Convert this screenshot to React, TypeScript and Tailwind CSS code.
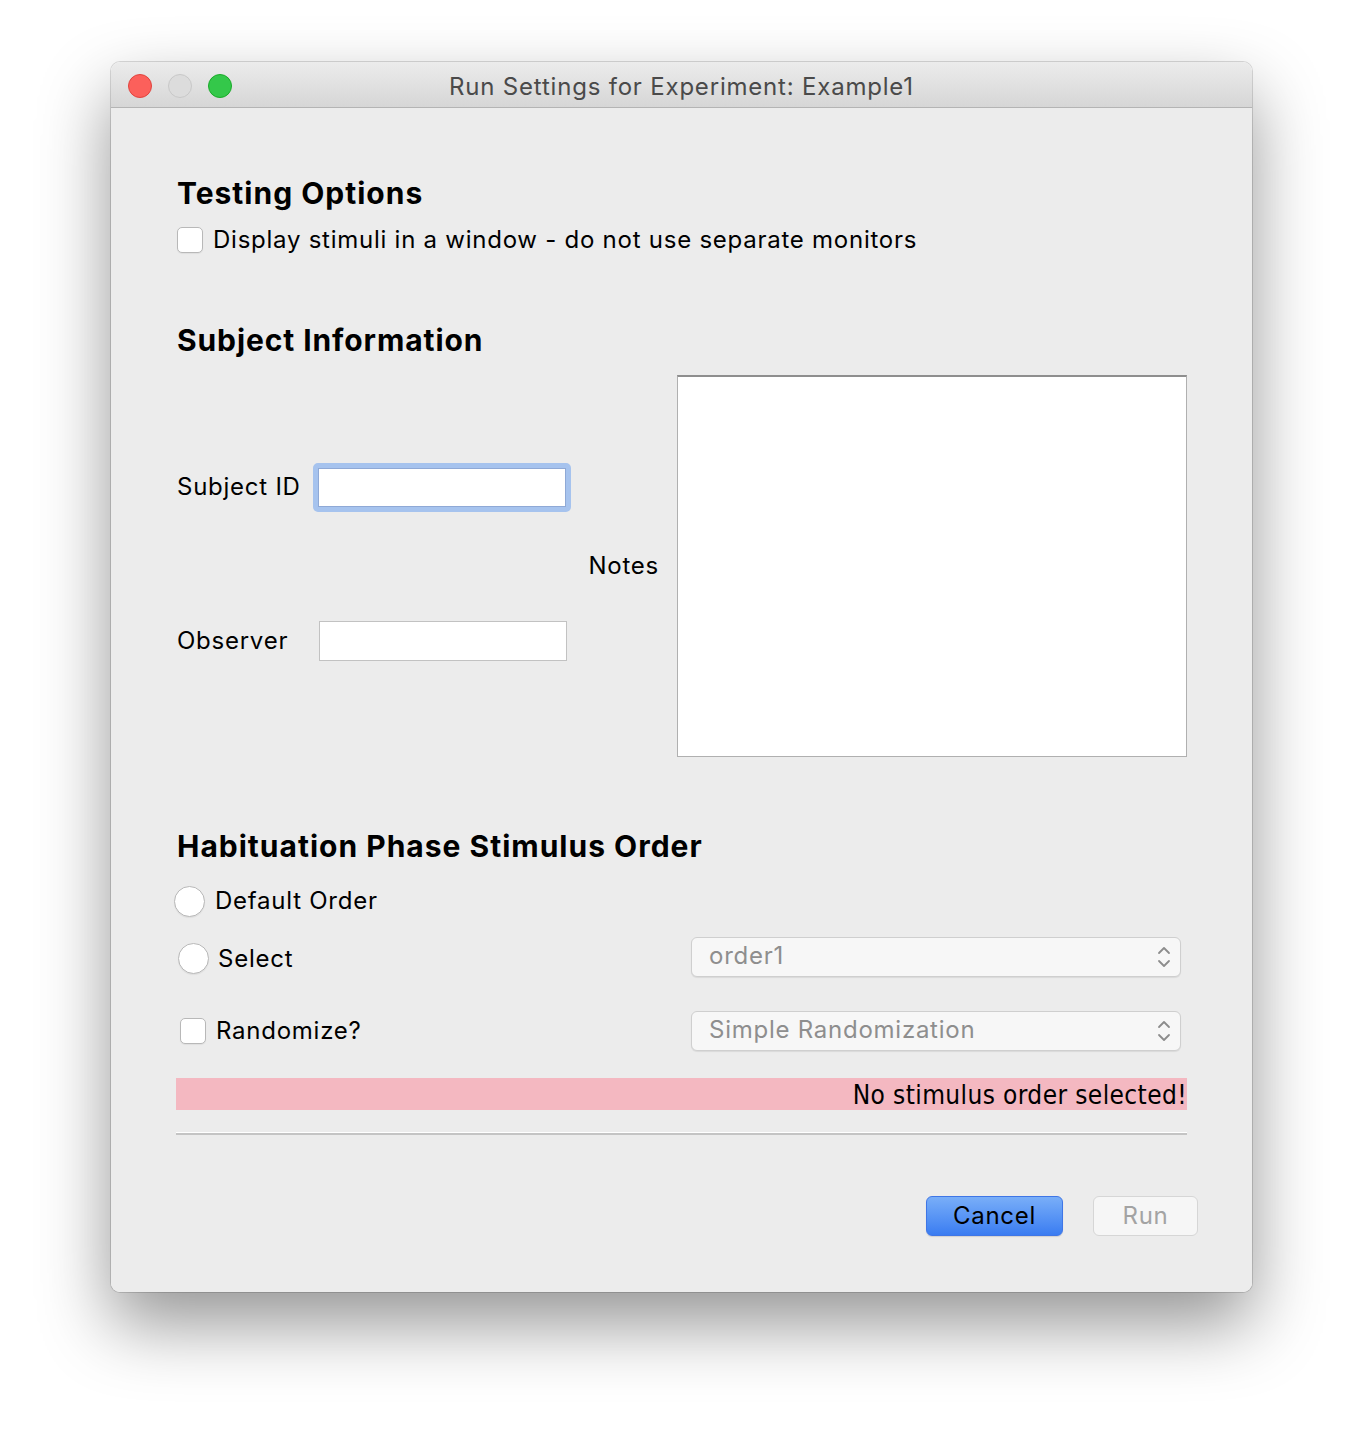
import React from "react";

const sans = { fontFamily: "Inter, 'Liberation Sans', sans-serif" };

function Checkbox() {
  return (
    <span className="inline-block h-[26px] w-[26px] shrink-0 rounded-[5px] border border-[#b8b8b8] bg-white shadow-[0_1px_1px_rgba(0,0,0,0.06)]" />
  );
}

function Radio() {
  return (
    <span className="inline-block h-[31px] w-[31px] shrink-0 rounded-full border border-[#b8b8b8] bg-white shadow-[0_1px_1px_rgba(0,0,0,0.06)]" />
  );
}

function Chevrons() {
  return (
    <svg width="16" height="26" viewBox="0 0 16 26" fill="none" stroke="#8c8c8c" strokeWidth="1.8" strokeLinecap="round" strokeLinejoin="round">
      <path d="M3 9 L8 4 L13 9" />
      <path d="M3 17 L8 22 L13 17" />
    </svg>
  );
}

function Dropdown({ value }: { value: string }) {
  return (
    <div className="flex h-[40px] w-[490px] items-center justify-between rounded-[6px] border border-[#cfcfcf] bg-[#f7f7f7] pl-[17px] pr-[8px] shadow-[0_1px_1px_rgba(0,0,0,0.08)]">
      <span className="-mt-[2px] text-[24px] tracking-[0.75px] text-[#8e8e8e]">{value}</span>
      <Chevrons />
    </div>
  );
}

export default function App() {
  return (
    <div className="min-h-[1452px] bg-white pl-[111px] pt-[62px]" style={sans}>
      <div className="flex h-[1230px] w-[1141px] flex-col overflow-hidden rounded-[9px] shadow-[0_32px_70px_rgba(0,0,0,0.42),0_0_0_1px_rgba(0,0,0,0.14)]">
        {/* title bar */}
        <div className="relative flex h-[46px] shrink-0 items-center justify-center border-b border-[#b4b4b4] bg-gradient-to-b from-[#ececec] to-[#d6d6d6] pt-[5px]">
          <div className="absolute left-[17px] top-[12px] flex gap-[16px]">
            <span className="h-[24px] w-[24px] rounded-full border border-[#e0443e] bg-[#fc605b]" />
            <span className="h-[24px] w-[24px] rounded-full border border-[#c8c8c8] bg-[#dcdcdc]" />
            <span className="h-[24px] w-[24px] rounded-full border border-[#1aab29] bg-[#34c84a]" />
          </div>
          <span className="text-[24px] tracking-[0.8px] text-[#4a4a4a]">Run Settings for Experiment: Example1</span>
        </div>

        {/* body */}
        <div className="flex-1 bg-[#ececec] pl-[66px] pr-[65px] text-black">
          <h2 className="mt-[67px] h-[36px] text-[30px] font-bold leading-[36px] tracking-[1px]">Testing Options</h2>
          <label className="mt-[15px] flex h-[28px] items-center gap-[10px] text-[24px] tracking-[0.75px]">
            <Checkbox />
            <span>Display stimuli in a window - do not use separate monitors</span>
          </label>

          <h2 className="mt-[68px] h-[36px] text-[30px] font-bold leading-[36px] tracking-[0.9px]">Subject Information</h2>
          <div className="mt-[17px] flex h-[382px] text-[24px] tracking-[0.75px]">
            <div className="flex w-[395px] flex-col">
              <div className="mt-[87px] flex h-[50px] items-center">
                <span className="w-[136px]">Subject ID</span>
                <div className="rounded-[5px] border-[4px] border-[#a6c3ee] bg-[#a6c3ee] p-[1px]">
                  <div className="h-[39px] w-[248px] border border-[#8fa9d6] bg-white" />
                </div>
              </div>
              <div className="mt-[109px] flex h-[40px] items-center">
                <span className="w-[142px]">Observer</span>
                <div className="h-[40px] w-[248px] border border-[#c2c2c2] bg-white" />
              </div>
            </div>
            <div className="flex w-[87px] items-center justify-end">Notes</div>
            <div className="ml-[18px] h-[382px] w-[510px] border border-t-2 border-[#b0b0b0] border-t-[#8e8e8e] bg-white" />
          </div>

          <h2 className="mt-[71px] h-[36px] text-[30px] font-bold leading-[36px] tracking-[1px]">Habituation Phase Stimulus Order</h2>
          <div className="text-[24px] tracking-[0.75px]">
            <label className="-ml-[3px] mt-[21px] flex h-[32px] items-center gap-[10px]">
              <Radio />
              <span>Default Order</span>
            </label>
            <div className="mt-[20px] flex h-[40px] items-center">
              <label className="ml-[1px] flex w-[513px] items-center gap-[9px] pt-[3px]">
                <Radio />
                <span>Select</span>
              </label>
              <Dropdown value="order1" />
            </div>
            <div className="mt-[34px] flex h-[40px] items-center">
              <label className="ml-[3px] flex w-[511px] items-center gap-[10px]">
                <Checkbox />
                <span>Randomize?</span>
              </label>
              <Dropdown value="Simple Randomization" />
            </div>
          </div>

          <div
            className="-ml-[1px] mt-[27px] flex h-[32px] items-center justify-end bg-[#f4b8c1] pt-[3px] text-[26px] tracking-[0.4px] text-black"
            style={{ fontFamily: "'Liberation Sans Narrow', 'DejaVu Sans Condensed', sans-serif" }}
          >
            No stimulus order selected!
          </div>

          <div className="-ml-[1px] mt-[22px] border-t border-white" />
          <div className="-ml-[1px] border-t-2 border-[#c4c4c4]" />

          <div className="-mr-[11px] mt-[61px] flex justify-end gap-[30px] tracking-[0.75px]">
            <button className="h-[40px] w-[137px] rounded-[6px] border border-[#3f76e6] bg-gradient-to-b from-[#79aef8] to-[#3a7cf1] text-[24px] text-black shadow-[0_1px_1px_rgba(0,0,0,0.12)]">
              Cancel
            </button>
            <button className="h-[40px] w-[105px] rounded-[6px] border border-[#d6d6d6] bg-[#f6f6f6] text-[24px] text-[#a3a3a3]">
              Run
            </button>
          </div>
        </div>
      </div>
    </div>
  );
}
